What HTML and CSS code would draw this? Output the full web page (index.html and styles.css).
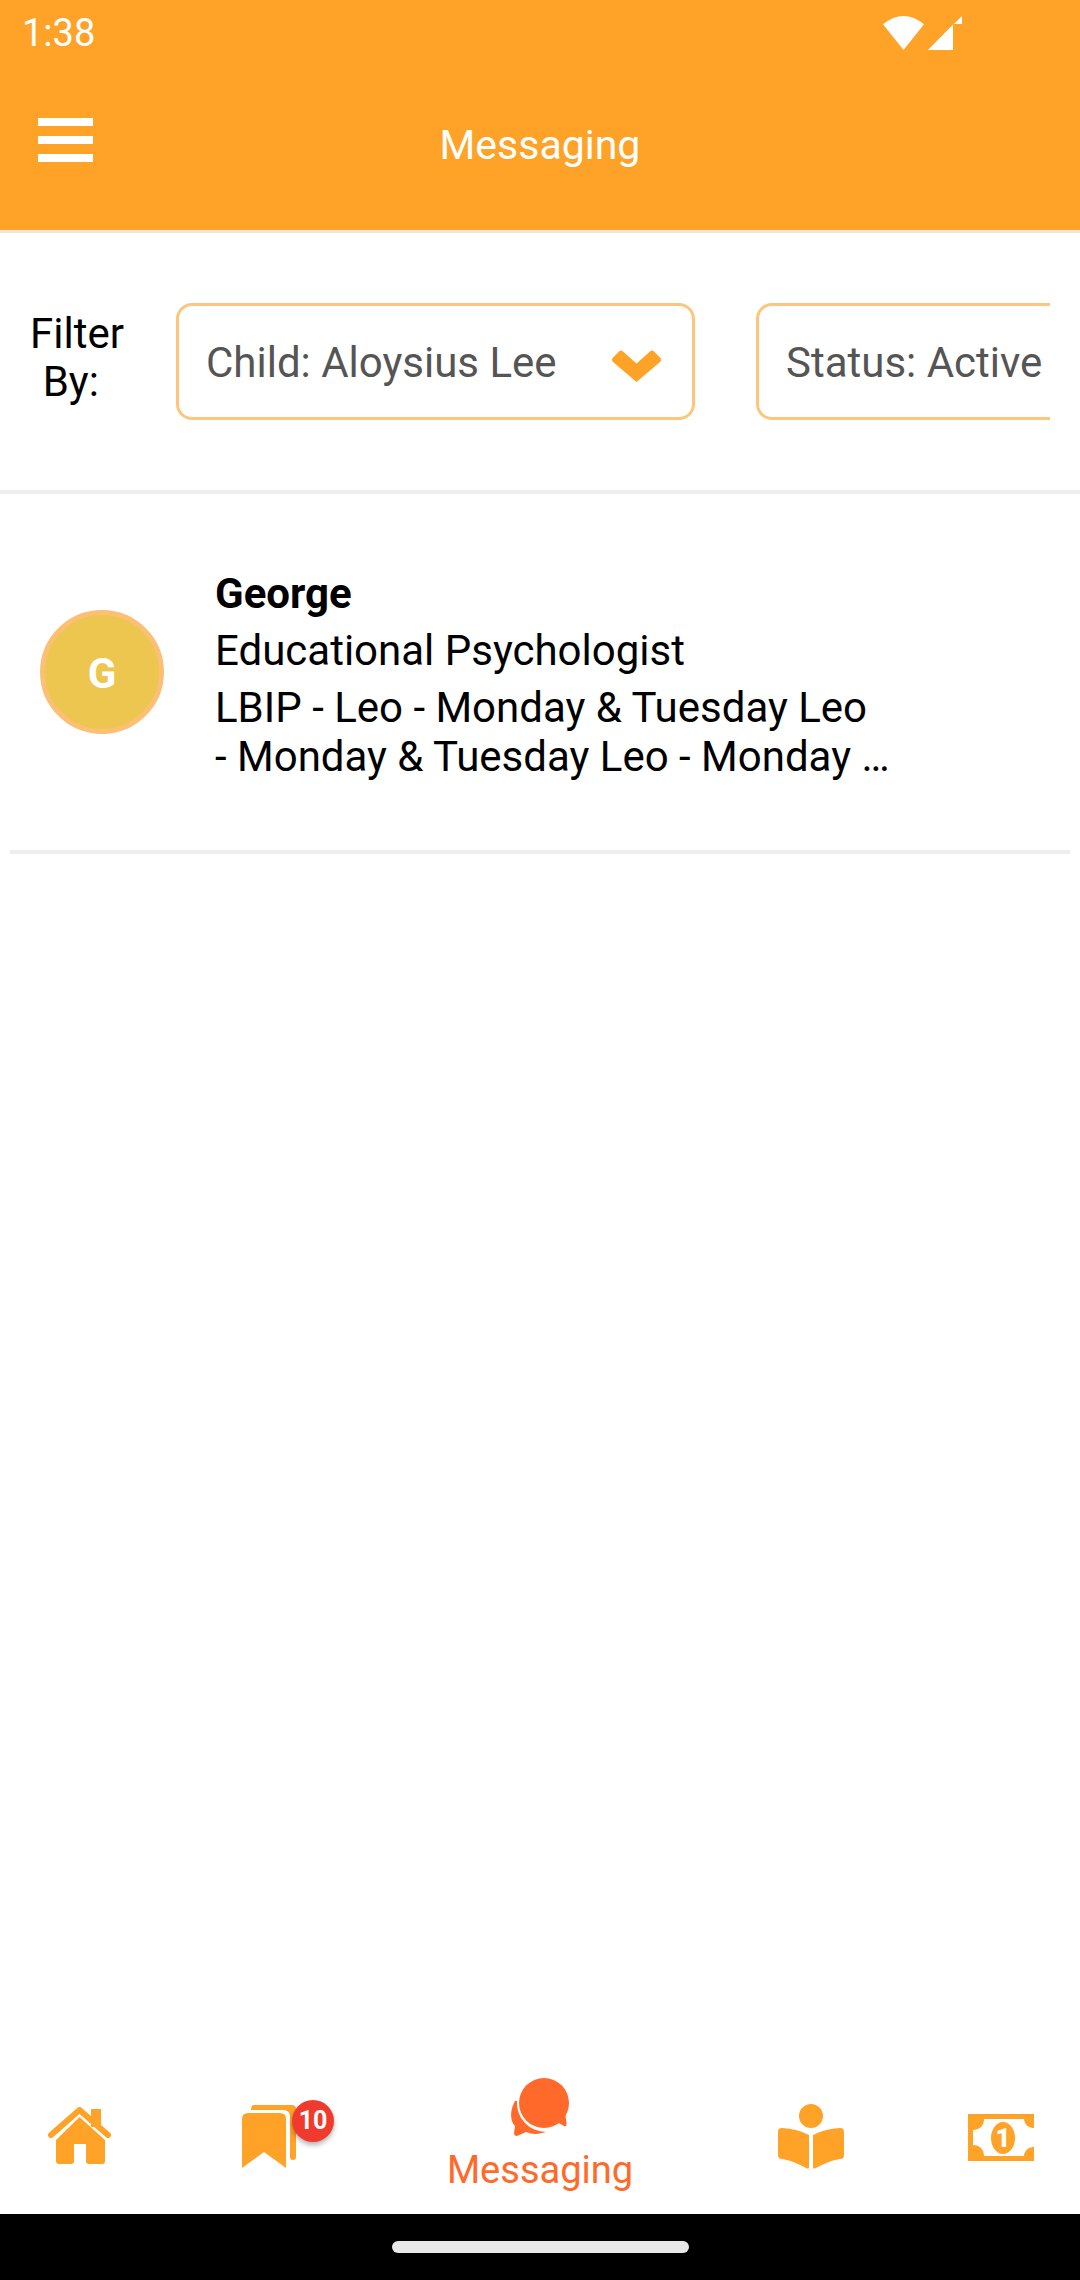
FILE: index.html
```html
<!DOCTYPE html>
<html lang="en">
<head>
    <meta charset="UTF-8">
    <meta name="viewport" content="width=device-width, initial-scale=1.0">
    <title>Messaging</title>
    <link rel="stylesheet" href="styles.css">
</head>
<body>
    <div class="app">
        <header class="app-header">
            <div class="status-bar">
                <span class="status-time">1:38</span>
                <div class="status-icons">
                    <svg class="wifi-icon" width="41" height="34" viewBox="0 0 41 34"><path d="M0 8.3Q20.5-8.3 41 8.3L20.5 34Z" fill="#fff"/></svg>
                    <svg class="signal-icon" width="34" height="34" viewBox="0 0 34 34"><path d="M0 34L25 8.5V34Z M26 8L34 0V8Z" fill="#fff"/></svg>
                </div>
            </div>
            <div class="toolbar">
                <div class="menu-button">
                    <span></span>
                    <span></span>
                    <span></span>
                </div>
                <h1 class="toolbar-title">Messaging</h1>
            </div>
        </header>

        <section class="filter-row">
            <div class="filter-label">Filter By:&nbsp;</div>
            <div class="filter-scroll">
                <div class="dropdown dropdown-child">
                    <span>Child: Aloysius Lee</span>
                    <svg class="chevron" width="50" height="32" viewBox="0 0 50 32"><path d="M1 12Q-1 9.5 1 7.5L7 1.5Q9-.5 11 1.5L24.5 13.5L38 1.5Q40-.5 42 1.5L48 7.5Q50 9.5 48 12L24.5 32Z" fill="#ffa328"/></svg>
                </div>
                <div class="dropdown dropdown-status">
                    <span>Status: Active</span>
                </div>
            </div>
        </section>

        <main class="thread-list">
            <div class="thread">
                <div class="avatar">G</div>
                <div class="thread-body">
                    <div class="thread-name">George</div>
                    <div class="thread-role">Educational Psychologist</div>
                    <div class="thread-subject">LBIP - Leo - Monday &amp; Tuesday Leo<br>- Monday &amp; Tuesday Leo - Monday …</div>
                </div>
            </div>
        </main>

        <nav class="tab-bar">
            <div class="tab">
                <svg width="63" height="58" viewBox="0 0 63 58">
                    <path d="M43 2H53V20H43Z" fill="#ffa328"/>
                    <path d="M3 28L31.5 3L60 28" fill="none" stroke="#ffa328" stroke-width="6" stroke-linecap="round" stroke-linejoin="round"/>
                    <path d="M31.5 10L57 33V54Q57 57 54 57H41Q38 57 38 54V37H26V54Q26 57 23 57H11Q8 57 8 54V33Z" fill="#ffa328"/>
                </svg>
            </div>
            <div class="tab">
                <div class="tab-icon">
                    <svg width="54" height="63" viewBox="0 0 54 63">
                        <path d="M12 0H50Q54 0 54 4V52Q54 55 51 55Q48 55 48 52V12Q48 5 41 5H9Q9 0 12 0Z" fill="#ffa328"/>
                        <path d="M6 8H38Q44 8 44 14V63L22 47L0 63V14Q0 8 6 8Z" fill="#ffa328"/>
                    </svg>
                    <span class="badge">10</span>
                </div>
            </div>
            <div class="tab tab-active">
                <svg width="62" height="62" viewBox="0 0 62 62">
                    <circle cx="35" cy="27" r="25" fill="#ff6a2b"/>
                    <path d="M48 46L55 50Q58 51 57.5 47L56 36Z" fill="#ff6a2b"/>
                    <path d="M5 27C1 35 1 45 6 50L5 57Q5 60 8 60L17 56C24 59 31 58 37 56A29 29 0 0 1 8 25Q6 24 5 27Z" fill="#ff6a2b"/>
                </svg>
                <span class="tab-label">Messaging</span>
            </div>
            <div class="tab">
                <svg width="66" height="65" viewBox="0 0 66 65">
                    <circle cx="33" cy="12" r="12" fill="#ffa328"/>
                    <path d="M4 24Q20 25 31 31V63Q31 65 29 64.5Q16 57 4 55Q0 55 0 51V28Q0 24 4 24Z" fill="#ffa328"/>
                    <path d="M62 24Q46 25 35 31V63Q35 65 37 64.5Q50 57 62 55Q66 55 66 51V28Q66 24 62 24Z" fill="#ffa328"/>
                </svg>
            </div>
            <div class="tab">
                <svg class="bill-icon" width="66" height="47" viewBox="0 0 66 47">
                    <rect width="66" height="47" rx="1" fill="#ffa328"/>
                    <rect x="5" y="5" width="61" height="37" fill="#fff"/>
                    <circle cx="6" cy="6" r="10" fill="#ffa328"/>
                    <circle cx="6" cy="41" r="10" fill="#ffa328"/>
                    <circle cx="65" cy="5" r="9" fill="#ffa328"/>
                    <circle cx="65" cy="42" r="9" fill="#ffa328"/>
                    <ellipse cx="35" cy="24" rx="12" ry="16" fill="#ffa328"/>
                    <text class="bill-digit" x="35" y="33" text-anchor="middle">1</text>
                </svg>
            </div>
        </nav>

        <div class="nav-bar">
            <div class="home-pill"></div>
        </div>
    </div>
</body>
</html>
```

FILE: styles.css
```css
* {
    margin: 0;
    padding: 0;
    box-sizing: border-box;
}

body {
    font-family: Roboto, sans-serif;
    background-color: white;
}

.app {
    width: 1080px;
    height: 2280px;
    display: flex;
    flex-direction: column;
    overflow: hidden;
}

.app-header {
    height: 233px;
    background-color: #ffa328;
    border-bottom: 3px solid #f0e6d8;
    color: white;
    flex-shrink: 0;
}

.status-bar {
    height: 66px;
    display: flex;
    justify-content: space-between;
    align-items: center;
    padding: 0 118px 0 22px;
}

.status-time {
    font-size: 38px;
}

.status-icons {
    display: flex;
    gap: 4px;
}

.toolbar {
    height: 164px;
    display: grid;
    grid-template-columns: 1fr auto 1fr;
    align-items: center;
    padding: 0 38px 6px;
}

.menu-button {
    width: 55px;
    display: flex;
    flex-direction: column;
    gap: 10px;
    margin-bottom: 11px;
}

.menu-button span {
    height: 8px;
    background-color: white;
}

.toolbar-title {
    font-size: 41px;
    font-weight: 400;
}

.filter-row {
    height: 261px;
    display: flex;
    align-items: center;
    padding: 0 30px;
    border-bottom: 4px solid #eeeeee;
    flex-shrink: 0;
}

.filter-label {
    width: 92px;
    margin-right: 54px;
    margin-bottom: 8px;
    font-size: 42px;
    line-height: 48px;
    text-align: center;
    color: black;
    flex-shrink: 0;
}

.filter-scroll {
    flex: 1;
    display: flex;
    gap: 61px;
    overflow: hidden;
}

.dropdown {
    height: 117px;
    display: flex;
    align-items: center;
    border: 3px solid #fcc67c;
    border-radius: 16px;
    padding-left: 27px;
    padding-top: 2px;
    font-size: 42px;
    color: #555;
    flex-shrink: 0;
}

.dropdown-child {
    width: 519px;
    justify-content: space-between;
    padding-right: 30px;
}

.chevron {
    margin-top: 6px;
}

.dropdown-status {
    width: 400px;
}

.thread-list {
    flex: 1;
}

.thread {
    height: 360px;
    margin: 0 10px;
    padding: 0 30px;
    display: flex;
    align-items: center;
    gap: 51px;
    border-bottom: 4px solid #eeeeee;
}

.avatar {
    width: 124px;
    height: 124px;
    border-radius: 50%;
    border: 5px solid #fcc074;
    background-color: #edc64f;
    color: white;
    font-size: 42px;
    font-weight: 700;
    padding-top: 2px;
    display: flex;
    align-items: center;
    justify-content: center;
    flex-shrink: 0;
}

.thread-body {
    margin-top: 1px;
    font-size: 42px;
    color: black;
}

.thread-name {
    font-weight: 700;
    line-height: 57px;
}

.thread-role {
    line-height: 57px;
}

.thread-subject {
    line-height: 49px;
    margin-top: 4px;
    white-space: nowrap;
}

.tab-bar {
    height: 156px;
    display: grid;
    grid-template-columns: 159px 220px 322px 220px 159px;
    align-items: center;
    flex-shrink: 0;
}

.tab {
    display: flex;
    flex-direction: column;
    align-items: center;
}

.tab-active {
    margin-bottom: 4px;
}

.tab-icon {
    position: relative;
    display: flex;
}

.bill-icon {
    margin-top: 2px;
}

.badge {
    position: absolute;
    left: 50px;
    top: -5px;
    width: 42px;
    height: 42px;
    border-radius: 50%;
    background-color: #f03a2e;
    box-shadow: 0 3px 5px rgba(0, 0, 0, 0.3);
    color: white;
    font-size: 25px;
    font-weight: 700;
    display: flex;
    align-items: center;
    justify-content: center;
}

.tab-label {
    font-size: 38px;
    line-height: 44px;
    margin-top: 10px;
    color: #ff6a2b;
}

.bill-digit {
    font-family: Roboto, sans-serif;
    font-size: 26px;
    font-weight: 900;
    fill: white;
}

.nav-bar {
    height: 66px;
    background-color: black;
    display: flex;
    justify-content: center;
    padding-top: 27px;
    flex-shrink: 0;
}

.home-pill {
    width: 297px;
    height: 12px;
    border-radius: 6px;
    background-color: #e8e8e8;
}
```
